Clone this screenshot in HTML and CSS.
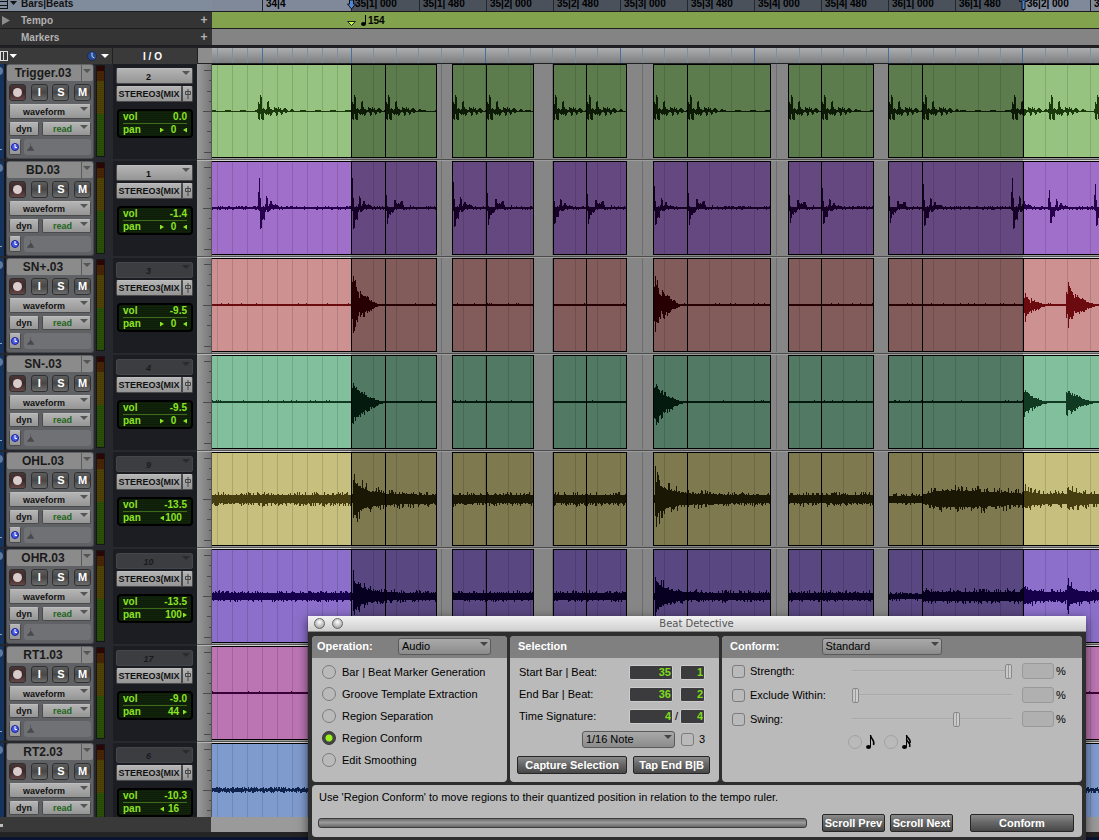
FILE: index.html
```html
<!DOCTYPE html>
<html lang="en">
<head>
    <meta charset="UTF-8">
    <meta name="viewport" content="width=device-width, initial-scale=1.0">
    <title>Beat Detective</title>
    <link rel="stylesheet" href="styles.css">
</head>
<body>
    <div class="editor">
        <div class="ruler-row bars">
            <div class="ruler-label">
                <svg class="ruler-icon" width="18" height="11"><path d="M0 1.5h7M0 5.5h7M0 8.5h7M7.500 0v9" stroke="#111" fill="none"/><path d="M10 1h7l-3.500 4z" fill="#111"/></svg>
                <span>Bars|Beats</span>
            </div>
            <svg class="ruler-view" id="bars"></svg>
        </div>
        <div class="ruler-row tempo">
            <div class="ruler-label">
                <svg class="ruler-icon" width="18" height="16"><path d="M2 4l8 4.500l-8 4.500z" fill="#8d8d8d"/></svg>
                <span>Tempo</span>
                <button class="add" aria-label="Add tempo change">+</button>
            </div>
            <svg class="ruler-view" id="tempo">
                <path d="M135.500 9.500h8l-4 4z" fill="#c8ff3c" stroke="#222"/>
                <path d="M153.500 3v9" stroke="#000" fill="none"/>
                <ellipse cx="151.500" cy="12" rx="2.500" ry="2" fill="#000"/>
                <text x="156" y="12">154</text>
            </svg>
        </div>
        <div class="ruler-row markers">
            <div class="ruler-label">
                <span>Markers</span>
                <button class="add" aria-label="Add marker">+</button>
            </div>
            <div class="ruler-view"></div>
        </div>
        <div class="column-head">
            <div class="head-tools">
                <svg width="18" height="12"><path d="M0 1.500h7M0 10.500h7M0.500 1v10M3.500 1v10M7.500 1v10" stroke="#ddd" fill="none"/><path d="M9.500 4h7.500l-3.750 4z" fill="#fff"/></svg>
                <svg width="26" height="12"><circle cx="6" cy="6" r="4.500" fill="#274b8f" stroke="#182c55"/><path d="M6 2.500v4l2.500 1.500" stroke="#c3d4f5" fill="none"/><path d="M15 4h8l-4 4z" fill="#fff"/></svg>
            </div>
            <div class="head-io">I / O</div>
            <svg class="head-grid" id="headGrid"></svg>
        </div>
        <div class="tracks" id="tracks"></div>
        <div class="scroll-row">
            <div class="scroll-left"></div>
            <div class="scroll-right"></div>
        </div>
        <div class="bottom-edge"></div>
    </div>

    <form class="window" onsubmit="return false">
        <div class="titlebar">
            <button class="light" type="button" aria-label="Close"></button>
            <button class="light" type="button" aria-label="Minimize"></button>
            <h1>Beat Detective</h1>
        </div>
        <div class="panels">
            <section class="panel">
                <div class="panel-head">
                    <label for="operation">Operation:</label>
                    <span class="drop drop-audio"><select id="operation"><option>Audio</option><option>MIDI</option></select></span>
                </div>
                <div class="operations">
                    <label><input type="radio" name="op">Bar | Beat Marker Generation</label>
                    <label><input type="radio" name="op">Groove Template Extraction</label>
                    <label><input type="radio" name="op">Region Separation</label>
                    <label><input type="radio" name="op" checked>Region Conform</label>
                    <label><input type="radio" name="op">Edit Smoothing</label>
                </div>
            </section>
            <section class="panel">
                <div class="panel-head"><h2>Selection</h2></div>
                <div class="selection">
                    <div class="sel-row">
                        <label for="startBar">Start Bar | Beat:</label>
                        <input class="bar" id="startBar" type="text" value="35">
                        <span></span>
                        <input class="beat" type="text" value="1" aria-label="Start beat">
                    </div>
                    <div class="sel-row">
                        <label for="endBar">End Bar | Beat:</label>
                        <input class="bar" id="endBar" type="text" value="36">
                        <span></span>
                        <input class="beat" type="text" value="2" aria-label="End beat">
                    </div>
                    <div class="sel-row">
                        <label for="meter">Time Signature:</label>
                        <input class="bar" id="meter" type="text" value="4">
                        <span>/</span>
                        <input class="beat" type="text" value="4" aria-label="Beat unit">
                    </div>
                    <div class="note-row">
                        <span class="drop drop-note"><select aria-label="Resolution"><option>1/16 Note</option><option>1/8 Note</option></select></span>
                        <label><input type="checkbox">3</label>
                    </div>
                    <div class="button-row">
                        <button class="btn btn-capture" type="button">Capture Selection</button>
                        <button class="btn btn-tap" type="button">Tap End B|B</button>
                    </div>
                </div>
            </section>
            <section class="panel">
                <div class="panel-head">
                    <label for="conform">Conform:</label>
                    <span class="drop drop-standard"><select id="conform"><option>Standard</option><option>Groove</option></select></span>
                </div>
                <div class="conform">
                    <div class="amount">
                        <label><input type="checkbox">Strength:</label>
                        <input type="range" value="100" aria-label="Strength amount">
                        <input type="text" aria-label="Strength percent">
                        <span>%</span>
                    </div>
                    <div class="amount">
                        <label><input type="checkbox">Exclude Within:</label>
                        <input type="range" value="0" aria-label="Exclude amount">
                        <input type="text" aria-label="Exclude percent">
                        <span>%</span>
                    </div>
                    <div class="amount">
                        <label><input type="checkbox">Swing:</label>
                        <input type="range" value="66" aria-label="Swing amount">
                        <input type="text" aria-label="Swing percent">
                        <span>%</span>
                    </div>
                    <div class="swing-notes">
                        <label>
                            <input type="radio" name="swing" aria-label="Eighth note">
                            <svg width="12" height="16"><path d="M5.500 1v12" stroke="#000" fill="none"/><ellipse cx="3.500" cy="13" rx="2.500" ry="2" fill="#000"/><path d="M5.500 1c0 4 5 5 3 10" stroke="#000" stroke-width="1.500" fill="none"/></svg>
                        </label>
                        <label>
                            <input type="radio" name="swing" aria-label="Sixteenth note">
                            <svg width="12" height="16"><path d="M5.500 1v12" stroke="#000" fill="none"/><ellipse cx="3.500" cy="13" rx="2.500" ry="2" fill="#000"/><path d="M5.500 1c0 3 5 4 3.500 8M5.500 5c0 3 5 4 3 8" stroke="#000" stroke-width="1.500" fill="none"/></svg>
                        </label>
                    </div>
                </div>
            </section>
        </div>
        <div class="panel footer">
            <p>Use 'Region Conform' to move regions to their quantized position in relation to the tempo ruler.</p>
            <div class="footer-row">
                <div class="progress"></div>
                <button class="btn btn-scroll" type="button">Scroll Prev</button>
                <button class="btn btn-scroll" type="button">Scroll Next</button>
                <button class="btn btn-conform" type="button">Conform</button>
            </div>
        </div>
    </form>

    <script src="script.js"></script>
</body>
</html>
```
FILE: styles.css
```css
* {
    box-sizing: border-box;
}
body {
    margin: 0;
    height: 100vh;
    overflow: hidden;
    position: relative;
    background: #232323;
    font-family: "Liberation Sans", Arial, sans-serif;
    font-size: 11px;
    color: #000;
}
button, input, select {
    font-family: inherit;
    margin: 0;
    padding: 0;
    border: none;
    border-radius: 0;
    appearance: none;
}
svg {
    display: block;
    flex: none;
}
h1, h2, p {
    margin: 0;
}

/* rulers */
.editor {
    display: flex;
    flex-direction: column;
    height: 100vh;
}
.ruler-row {
    flex: none;
    display: grid;
    grid-template-columns: 212px 1fr;
    height: 17px;
    border-bottom: 1px solid #1c1c1e;
    font-size: 10px;
    font-weight: bold;
}
.ruler-label {
    display: flex;
    align-items: center;
    padding: 0 3px 0 21px;
    background: #343434;
    color: #b2b2b2;
    position: relative;
}
.ruler-icon {
    position: absolute;
    left: 0;
    top: 0;
}
.ruler-view {
    width: 100%;
    height: 100%;
    font-size: 10px;
}
.add {
    margin-left: auto;
    width: 10px;
    background: none;
    color: #b2b2b2;
    font-size: 12px;
    font-weight: bold;
    line-height: 14px;
}
.bars {
    height: 12px;
}
.bars .ruler-label {
    background: #808b9b;
    color: #111;
    line-height: 8px;
    align-items: flex-start;
}
.bars .ruler-view {
    background: #808999;
}
.tempo .ruler-view {
    background: #82a24d;
}
.markers .ruler-view {
    background: #848484;
}
.column-head {
    flex: none;
    display: grid;
    grid-template-columns: 112px 84px 1fr;
    gap: 1px;
    height: 18px;
    padding-top: 2px;
    background: #202123;
}
.head-tools, .head-io {
    display: flex;
    align-items: center;
    justify-content: space-between;
    background: #3a3a3a;
}
.head-io {
    justify-content: center;
    padding-right: 5px;
    color: #fff;
    font-weight: bold;
    font-size: 10px;
}
.head-grid {
    width: 100%;
    height: 15px;
    background: linear-gradient(#acaeaf, #999b9d 40%, #7c7e80);
}

/* tracks */
.tracks {
    flex: 1;
    min-height: 0;
    overflow: hidden;
    background: #26282d;
}
.track {
    display: grid;
    grid-template-columns: 6px 88px 15px 4px 84px 15px 1fr;
    height: 97px;
}
.edge {
    background: #16335e;
    border-right: 2px solid #15171c;
    height: 95px;
    overflow: hidden;
}
.strip {
    height: 95px;
    background: #5f6165;
    border: 1px solid #46484c;
    border-top: none;
    border-radius: 3px;
    padding: 1px 0 3px;
    display: flex;
    flex-direction: column;
    gap: 3px;
}
.name {
    display: flex;
    height: 16px;
    background: #8b8b8b;
    border-radius: 2px;
}
.name span {
    flex: 1;
    padding-right: 2px;
    text-align: center;
    font-size: 12px;
    font-weight: bold;
    line-height: 17px;
    color: #1a1a1a;
    white-space: nowrap;
}
.name button {
    width: 12px;
    background: none;
    border-left: 1px solid #5b5b5b;
    position: relative;
}
.name button::after, .pick::after {
    content: "";
    position: absolute;
    right: 2px;
    top: 4px;
    border: 4px solid transparent;
    border-top-color: #555;
    border-bottom: none;
}
.keys {
    display: flex;
    justify-content: space-between;
    padding: 0 2px;
}
.key {
    width: 17px;
    height: 17px;
    border: 1px solid #303030;
    border-radius: 3px;
    background: linear-gradient(#5e5e5e, #474747 50%, #6c6c6c);
    color: #fff;
    font-size: 11px;
    font-weight: bold;
    line-height: 15px;
    text-align: center;
}
.key.rec {
    background: linear-gradient(#4a3636, #3e2828 50%, #664848);
}
.key.rec::before {
    content: "";
    display: block;
    width: 9px;
    height: 9px;
    margin: 0 auto;
    border-radius: 50%;
    background: #d8cccc;
}
.modes {
    display: flex;
    gap: 3px;
    padding: 0 2px;
    height: 16px;
}
.pick {
    flex: 1;
    position: relative;
    display: block;
}
.pick select, .flat {
    width: 100%;
    height: 100%;
    border-radius: 2px;
    border: 1px solid #4a4a4a;
    border-top-color: #bdbdbd;
    background: linear-gradient(#b4b4b4, #959595);
    color: #111;
    font-size: 9px;
    font-weight: bold;
}
.pick select {
    padding: 1px 12px 0 0;
    text-align: center;
    text-align-last: center;
}
.pick::after {
    top: 3px;
    right: 3px;
    pointer-events: none;
}
.flat.dyn {
    width: 30px;
}
.flat.clock {
    width: 12px;
    display: flex;
    align-items: center;
    justify-content: center;
}
.read select {
    color: #1c6418;
    padding-right: 8px;
}
.comment {
    flex: 1;
    background: #707174;
    border-radius: 3px;
    padding: 4px 3px;
}
.meter {
    margin: 1px 4px 2px 2px;
    height: 92px;
    border: 1px solid #15161a;
    background: repeating-linear-gradient(transparent 0 1px, rgba(0,0,0,0.12) 1px 2px), linear-gradient(#2c0705 0 5px, #4b2606 5px 15px, #514406 15px 48px, #2a5208 48px);
}
.io {
    height: 95px;
    background: #1b1d22;
    padding: 4px 4px 0 3px;
}
.io .pick {
    height: 16px;
    margin-bottom: 2px;
}
.io .output {
    display: flex;
    height: 16px;
}
.io .output .flat:first-child {
    flex: 1;
    border-radius: 2px 0 0 2px;
    white-space: nowrap;
}
.io .output .flat:last-child {
    width: 11px;
    border-radius: 0 2px 2px 0;
    display: flex;
    align-items: center;
    justify-content: center;
}
.io .off select {
    background: #3c3d41;
    border-color: #45464b;
    color: #1b1b1d;
    font-style: italic;
    opacity: 1;
}
.io .off::after {
    border-top-color: #2a2b2e;
}
.level {
    margin: 7px 0 0 1px;
    padding: 0 4px;
    height: 29px;
    border: 2px solid #000;
    border-radius: 4px;
    background: repeating-linear-gradient(#0d1d08 0 1px, #13240d 1px 2px);
    color: #8be321;
    font-size: 10px;
    font-weight: bold;
}
.level div {
    display: flex;
    justify-content: space-between;
    align-items: center;
    height: 12px;
    line-height: 12px;
}
.level div + div {
    border-top: 1px solid #3c6a1a;
    height: 13px;
}
.pan {
    display: grid;
    grid-template-columns: 4px 19px 4px;
    align-items: center;
    text-align: center;
}
.pan i {
    height: 5px;
    background: #8be321;
    visibility: hidden;
}
.pan .left {
    clip-path: polygon(100% 0, 100% 100%, 0 50%);
    visibility: visible;
}
.pan .right {
    clip-path: polygon(0 0, 0 100%, 100% 50%);
    visibility: visible;
}
.gutter {
    width: 15px;
    height: 97px;
    background: linear-gradient(90deg, #9a9a9a, #767676);
}
.lane {
    width: 100%;
    height: 97px;
    background: #c4c4c4;
}
.scroll-row {
    flex: none;
    display: grid;
    grid-template-columns: 211px 1fr;
    height: 15px;
    background: #393939;
}
.scroll-left {
    background: linear-gradient(#bbb, #bbb) 0 7px / 3px 3px no-repeat;
}
.scroll-right {
    background: #9a9a9a;
}
.bottom-edge {
    flex: none;
    height: 8px;
    background: linear-gradient(#242424 0 5px, #0b1430 5px);
}

/* floating window */
.window {
    position: absolute;
    left: 308px;
    right: 13px;
    top: 616px;
    height: 226px;
    background: #2e2e2e;
    box-shadow: 0 3px 10px rgba(0,0,0,0.6);
}
.titlebar {
    display: flex;
    align-items: center;
    gap: 7px;
    height: 16px;
    padding-left: 6px;
    background: linear-gradient(#f2f2f2, #cfcfcf);
    border-bottom: 1px solid #8a8a8a;
    position: relative;
}
.titlebar h1 {
    flex: 1;
    margin-right: 43px;
    text-align: center;
    font-family: "DejaVu Sans", sans-serif;
    font-weight: normal;
    font-size: 10px;
    line-height: 16px;
    color: #555;
}
.light {
    width: 11px;
    height: 11px;
    border-radius: 50%;
    border: 1px solid #666;
    background: radial-gradient(circle at 50% 35%, #fff, #bbb 60%, #888);
}
.panels {
    display: grid;
    grid-template-columns: 195fr 209fr 360fr;
    gap: 3px;
    padding: 4px 4px 3px;
}
.panel {
    background: #bababa;
    border-radius: 4px;
    overflow: hidden;
    height: 146px;
}
.panel-head {
    display: flex;
    align-items: center;
    height: 22px;
    padding: 0 8px 2px 5px;
    background: #808080;
    color: #fff;
    font-weight: bold;
}
.panel-head h2 {
    font-size: 11px;
    padding-left: 3px;
}
.drop {
    display: block;
    position: relative;
    height: 17px;
    width: 93px;
}
.drop select {
    width: 100%;
    height: 100%;
    border: 1px solid #5a5a5a;
    border-radius: 3px;
    background: linear-gradient(#a9a9a9, #8b8b8b);
    padding-left: 3px;
    font-size: 11px;
    color: #000;
}
.drop::after {
    content: "";
    position: absolute;
    right: 3px;
    top: 4px;
    border: 4px solid transparent;
    border-top-color: #444;
    border-bottom: none;
    pointer-events: none;
}
.drop-audio {
    margin-left: auto;
    margin-right: 8px;
}
.drop-standard {
    width: 120px;
    margin-left: 42px;
}
.panel:nth-child(3) .panel-head {
    padding-left: 8px;
}
.operations {
    display: grid;
    grid-auto-rows: 22px;
    padding: 3px 0 0 10px;
}
label {
    display: flex;
    align-items: center;
    white-space: nowrap;
}
input[type="radio"] {
    width: 14px;
    height: 14px;
    margin-right: 6px;
    border: 1px solid #7c7c7c;
    border-radius: 50%;
}
input[type="radio"]:checked {
    border: 1px solid #333;
    background: radial-gradient(circle, #9af01c 0 3px, #444 4px);
}
input[type="checkbox"] {
    width: 13px;
    height: 13px;
    margin-right: 5px;
    border: 1px solid #7c7c7c;
    border-radius: 3px;
}
.selection {
    padding: 3px 14px 0 9px;
}
.sel-row {
    display: grid;
    grid-template-columns: 1fr 44px 7px 25px;
    align-items: center;
    height: 22px;
    text-align: center;
}
.sel-row input {
    width: 100%;
    height: 15px;
    background: #3b3b3d;
    border: 1px solid #ccc;
    border-radius: 2px;
    padding-right: 1px;
    text-align: right;
    color: #7ddc1b;
    font-size: 11px;
    font-weight: bold;
}
.note-row {
    display: flex;
    justify-content: flex-end;
    align-items: center;
    gap: 6px;
    height: 24px;
}
.button-row {
    display: flex;
    gap: 6px;
    margin: 5px -5px 0 -2px;
}
.btn {
    height: 18px;
    border: 1px solid #262626;
    border-radius: 2px;
    background: linear-gradient(#8a8a8a, #686868 45%, #474747);
    color: #fff;
    font-size: 11px;
    font-weight: bold;
    white-space: nowrap;
}
.btn-capture {
    flex: 110;
}
.btn-tap {
    flex: 76;
}
.conform {
    padding: 1px 10px 0;
}
.amount {
    display: grid;
    grid-template-columns: 1fr 160px 44px 16px;
    align-items: center;
    height: 24px;
}
.amount input[type="text"] {
    height: 16px;
    width: 32px;
    margin-left: 10px;
    background: #b0b0b0;
    border: 1px solid #999;
    border-radius: 3px;
}
.amount input[type="range"] {
    width: 160px;
    height: 16px;
    background: linear-gradient(#a0a0a0, #c6c6c6) center / 100% 2px no-repeat;
}
.amount input[type="range"]::-webkit-slider-thumb {
    appearance: none;
    width: 7px;
    height: 15px;
    border: 1px solid #888;
    border-radius: 2px;
    background: linear-gradient(90deg, #c8c8c8 2px, #999 2px 3px, #ccc 3px);
}
.swing-notes {
    display: flex;
    gap: 7px;
    height: 22px;
    padding-left: 116px;
}
.swing-notes input[type="radio"] {
    margin-right: 3px;
    border-color: #a2a2a2;
}
.footer {
    height: 52px;
    margin: 0 4px;
    padding: 6px 8px 0 7px;
}
.footer p {
    line-height: 13px;
}
.footer-row {
    display: flex;
    align-items: center;
    gap: 5px;
    margin: 10px 0 0 -1px;
}
.progress {
    flex: 1;
    height: 10px;
    margin-right: 10px;
    border: 1px solid #3c3c3c;
    border-radius: 3px;
    background: linear-gradient(#6c6c6c, #9c9c9c 45%, #666);
}
.btn-scroll {
    width: 63px;
}
.btn-conform {
    width: 104px;
    margin-left: 12px;
}
```
FILE: script.js
```js
// Timeline coordinates count from the left edge of the lanes
const ORIGIN = 212;
const SEL_START = 351;
const SEL_END = 1023;
const BEATS = [351, 486, 620, 754, 888, 1023];
const CLIPS = [[351, 437, 385], [452, 534, 486], [553, 627, 586], [653, 771, 687], [788, 874, 821], [888, 1024, 922]];

const TRACKS = [
    { name: 'Trigger.03', out: '2', vol: '0.0', pan: '0', side: 'c', light: '#96c37f', dark: '#5d7c4e', ink: '#1b3a0c', inkDark: '#0c1a06', kind: 'trigger' },
    { name: 'BD.03', out: '1', vol: '-1.4', pan: '0', side: 'c', light: '#a06fca', dark: '#664880', ink: '#26004c', inkDark: '#160025', kind: 'kick' },
    { name: 'SN+.03', out: '3', off: true, vol: '-9.5', pan: '0', side: 'c', light: '#cc9190', dark: '#815c5b', ink: '#6b0a0f', inkDark: '#260003', kind: 'snareTop' },
    { name: 'SN-.03', out: '4', off: true, vol: '-9.5', pan: '0', side: 'c', light: '#82bf9c', dark: '#517963', ink: '#103a22', inkDark: '#041a0e', kind: 'snareBottom' },
    { name: 'OHL.03', out: '9', off: true, vol: '-13.5', pan: '100', side: 'l', light: '#c7bf7d', dark: '#7e794f', ink: '#463e10', inkDark: '#1a1805', kind: 'overLeft' },
    { name: 'OHR.03', out: '10', off: true, vol: '-13.5', pan: '100', side: 'r', light: '#8b6fca', dark: '#584780', ink: '#16004c', inkDark: '#080020', kind: 'overRight' },
    { name: 'RT1.03', out: '17', off: true, vol: '-9.0', pan: '44', side: 'r', light: '#bb75b3', dark: '#774a72', ink: '#3a0035', inkDark: '#1a0018', kind: 'line' },
    { name: 'RT2.03', out: '6', off: true, vol: '-10.3', pan: '16', side: 'l', light: '#7f9bce', dark: '#516384', ink: '#10234c', inkDark: '#081228', kind: 'hiss' }
];

// [up, down] in pixels for each column after the hit
const TRIGGER = [[2, 1], [9, 7], [7, 8], [16, 2], [14, 7], [2, 8], [3, 8], [2, 1], [1, 2], [2, 3], [9, 2], [10, 3], [4, 2], [2, 4], [2, 3], [1, 1], [1, 0], [4, 0], [3, 1], [3, 4], [2, 3], [4, 0], [2, 0], [3, 1], [1, 3], [1, 2], [2, 0], [3, 0], [3, 1], [2, 1], [1, 0], [0, 0], [0, 0], [1, 0], [2, 0], [2, 0], [1, 0]];
const KICK = [[16, 1], [30, 2], [10, 20], [1, 19], [1, 11], [2, 10], [1, 11], [4, 3], [12, 1], [10, 3], [2, 3], [4, 2], [7, 1], [7, 0], [4, 0], [3, 1], [3, 0], [4, 0], [3, 0], [3, 0], [2, 0], [1, 1], [1, 0], [2, 0], [1, 1], [1, 0]];
// second strokes ring with a later, broader tail
const KICK_SECOND = [[30, 1], [25, 3], [3, 22], [1, 14], [1, 8], [2, 9], [1, 5], [1, 6], [1, 4], [12, 1], [12, 0], [7, 1], [6, 0], [7, 0], [6, 0], [9, 0], [10, 0], [10, 0], [4, 2], [2, 1], [1, 0], [1, 1], [2, 0], [1, 0], [1, 1], [4, 0], [2, 0], [1, 0]];
const TRIGGER_HITS = [257, 351, 385, 452, 486, 552, 586, 653, 687, 788, 821, 888, 922, 1011, 1048, 1094];
const KICK_HITS = [[258, 30], [351, 30], [385, 16, 1], [452, 26], [486, 18, 1], [552, 20], [586, 17, 1], [653, 22], [687, 18, 1], [788, 15, 1], [821, 20], [888, 14, 1], [922, 24], [1011, 30], [1048, 18], [1094, 24]];
const SNARE_HITS = {
    snareTop: [[351, 40, 38, 28], [653, 40, 38, 28], [1023, 18, 21, 24], [1066, 30, 28, 30]],
    snareBottom: [[351, 21, 26, 34], [653, 21, 26, 32], [1023, 14, 16, 26], [1066, 14, 15, 30]]
};

function noise(n) {
    const v = Math.sin(n * 127.1 + 311.7) * 43758.5453;
    return v - Math.floor(v);
}

function lastHit(hits, x) {
    let found = null;
    for (const hit of hits) {
        if (hit[0] <= x) found = hit;
    }
    return found;
}

function amplitude(kind, x, seed) {
    const r = noise(x + seed * 1000);
    const r2 = noise(x * 3 + seed * 777);
    if (kind === 'trigger') {
        const hit = lastHit(TRIGGER_HITS.map(h => [h]), x);
        const step = hit && TRIGGER[x - hit[0]];
        return step || [x % 15 < 6 ? 1 : 0, 0];
    }
    if (kind === 'kick') {
        const hit = lastHit(KICK_HITS, x);
        const step = hit && (hit[2] ? KICK_SECOND : KICK)[x - hit[0]];
        if (step && x - hit[0] < 3) return [Math.max(1, step[0] * hit[1] / 30), step[1] * (hit[1] + 12) / 42];
        if (step) return [Math.max(1, step[0] * (hit[1] + 12) / 42), step[1] * (hit[1] + 12) / 42];
        return [r > 0.7 ? 2 : 1, r2 > 0.8 ? 1 : 0];
    }
    if (SNARE_HITS[kind]) {
        const hit = lastHit(SNARE_HITS[kind], x);
        if (hit && x - hit[0] < hit[3]) {
            const t = (x - hit[0]) / hit[3];
            let env;
            if (kind === 'snareBottom') {
                env = Math.pow(1 - t, 1.5);
            } else if (t < 0.3) {
                env = t < 0.05 ? 0.6 : 1.1 - t * 3;
            } else {
                env = 0.4 * Math.pow(1 - (t - 0.3) / 0.7, 1.2);
            }
            return [Math.max(1, hit[1] * env * (0.6 + r * 0.4)), hit[2] * env * (0.5 + r2 * 0.5)];
        }
        return [r > 0.93 ? 2 : 1, 0];
    }
    if (kind === 'overLeft' || kind === 'overRight') {
        const left = kind === 'overLeft';
        let level = left ? 5 : 4;
        for (const start of [353, 655]) {
            if (x >= start && x < start + 85) level += (left ? 17 : 16) * Math.exp(-(x - start) / 9) + (left ? 3 : 1) * (1 - (x - start) / 85);
        }
        if (x > 888 && x < 922) level = left ? 4 : 3;
        if (x >= 922 && x < 1023) level = left ? Math.min(10, 5 + (x - 922) / 3) - Math.max(0, (x - 975) / 16) : 5.5;
        if (x >= 1023) level = (left ? 6 : 5) + 6 * Math.exp(-(x - 1023) / 8);
        if (x >= 1067) level += (left ? 7 : 9) * Math.exp(-(x - 1067) / 8);
        return [level * (0.75 + r * r * r * 0.7), level * (0.65 + r2 * r2 * r2 * 0.7)];
    }
    if (kind === 'hiss') return [1 + r * 2, r2 * 2];
    return [r > 0.96 ? 2 : 1, 0];
}

function gridXs() {
    const xs = [];
    for (let x = 217; x < 350; x += 15) xs.push(x);
    for (let i = 0; i <= 33; i++) xs.push(Math.floor(351.5 + i * 22.38));
    return xs;
}

function rect(x, y, w, h, fill) {
    return `<rect x="${x}" y="${y}" width="${w}" height="${h}" fill="${fill}"/>`;
}

function wavePath(track, from, to, seed, color) {
    let d = '';
    for (let x = from; x < to; x++) {
        const [up, down] = amplitude(track.kind, x, seed).map(Math.round);
        d += `M${x - ORIGIN} ${47 - up}h1v${up + down + 1}h-1z`;
    }
    return `<path d="${d}" fill="${color}"/>`;
}

function laneSvg(track, seed) {
    const selX = SEL_START - ORIGIN;
    const selW = SEL_END - SEL_START;
    let s = rect(0, 94, '100%', 1, '#999') + rect(0, 95, '100%', 1, '#555') + rect(0, 96, '100%', 1, '#d2d2d2');
    s += rect(selX, 0, selW, 97, '#868686') + rect(selX, 95, selW, 1, '#4c4c4c') + rect(selX, 96, selW, 1, '#9c9c9c');
    for (const x of gridXs()) s += rect(x - ORIGIN, 0, 1, 94, 'rgba(60,60,110,0.12)');

    s += rect(0, 0, selX, 94, track.light) + rect(SEL_END - ORIGIN, 0, '100%', 94, track.light);
    for (const [a, b] of CLIPS) s += rect(a - ORIGIN, 0, b - a, 94, track.dark);
    for (const x of gridXs()) s += rect(x - ORIGIN, 0, 1, 94, 'rgba(0,0,0,0.13)');
    s += wavePath(track, ORIGIN, SEL_START, seed, track.ink);
    for (const [a, b, split] of CLIPS) {
        s += wavePath(track, a, b, seed, track.inkDark);
        s += rect(a - ORIGIN, 0, 1, 94, '#000') + rect(b - 1 - ORIGIN, 0, 1, 94, '#000') + rect(split - ORIGIN, 0, 1, 94, '#000');
        s += rect(a - ORIGIN, 0, b - a, 1, '#000') + rect(a - ORIGIN, 93, b - a, 1, '#000');
    }
    s += wavePath(track, SEL_END + 1, 2400, seed, track.ink);
    for (const y of [0, 93]) s += rect(0, y, selX, 1, '#000') + rect(SEL_END - ORIGIN, y, '100%', 1, '#000');
    return `<svg class="lane" shape-rendering="crispEdges">${s}</svg>`;
}

function gutterSvg() {
    let s = '';
    [[6, 8], [16, 3], [27, 5], [37, 3], [47, 9], [57, 3], [67, 5], [78, 3], [88, 8]].forEach(([y, w]) => {
        s += rect(15 - w, y, w, 1, '#4a4a4a');
    });
    return `<svg class="gutter" shape-rendering="crispEdges">${s}${rect(14, 0, 1, 97, '#555')}${rect(0, 95, 15, 1, '#555')}${rect(0, 96, 15, 1, '#b5b5b5')}</svg>`;
}

function trackHtml(t, i) {
    const left = t.side === 'l' ? 'left' : t.side === 'c' ? 'right' : '';
    const right = t.side === 'r' ? 'right' : t.side === 'c' ? 'left' : '';
    return `<div class="track">
        <div class="edge"><svg width="4" height="95"><circle cx="-1" cy="7" r="4" fill="#60789a"/><path d="M0 85.500h2" stroke="#8fa5c4"/></svg></div>
        <div class="strip">
            <div class="name"><span>${t.name}</span><button aria-label="Playlist"></button></div>
            <div class="keys">
                <button class="key rec" aria-label="Record"></button>
                <button class="key">I</button>
                <button class="key">S</button>
                <button class="key">M</button>
            </div>
            <div class="modes"><span class="pick"><select aria-label="Track view"><option>waveform</option></select></span></div>
            <div class="modes">
                <button class="flat dyn">dyn</button>
                <span class="pick read"><select aria-label="Automation"><option>read</option></select></span>
            </div>
            <div class="modes">
                <button class="flat clock" aria-label="Timebase"><svg width="8" height="10"><circle cx="4" cy="5" r="3.500" fill="#4a5cf0" stroke="#1a2290"/><path d="M4 2v3.500h2" stroke="#fff" fill="none"/></svg></button>
                <div class="comment"><svg width="8" height="8"><path d="M3.500 0v5M4 3l3 4.500h-7z" fill="#48494c" stroke="#48494c" stroke-width="0.500"/></svg></div>
            </div>
        </div>
        <div class="meter"></div>
        <div></div>
        <div class="io">
            <span class="pick${t.off ? ' off' : ''}"><select aria-label="Input"><option>${t.out}</option></select></span>
            <div class="output">
                <button class="flat">STEREO3(MIX</button>
                <button class="flat" aria-label="Output window"><svg width="6" height="10"><path d="M3 0v10M0.500 2.500h5v3h-5z" stroke="#444" fill="none"/></svg></button>
            </div>
            <div class="level">
                <div><span>vol</span><span>${t.vol}</span></div>
                <div><span>pan</span><span class="pan"><i class="${left}"></i>${t.pan}<i class="${right}"></i></span></div>
            </div>
        </div>
        ${gutterSvg()}
        ${laneSvg(t, i)}
    </div>`;
}

function barsSvg() {
    const labels = [[262, '34|4'], [351, '35|1| 000'], [419, '35|1| 480'], [486, '35|2| 000'], [553, '35|2| 480'], [620, '35|3| 000'], [687, '35|3| 480'], [754, '35|4| 000'], [821, '35|4| 480'], [888, '36|1| 000'], [955, '36|1| 480'], [1023, '36|2| 000'], [1090, '36|2| 480']];
    let s = rect(SEL_START - ORIGIN, 0, SEL_END - SEL_START, 12, '#4a515b');
    for (const [x, text] of labels) {
        s += rect(x - ORIGIN, 0, 1, 12, '#23262b') + `<text x="${x - ORIGIN + 4}" y="7">${text}</text>`;
    }
    s += '<path d="M137.500 0v4h-2l4 5l4 -5h-2v-4z" fill="#4b86d8" stroke="#111"/>';
    s += '<path d="M807.500 0h8v1.500h-2.500v8h-3v-8h-2.500z" fill="#4b86d8" stroke="#111"/>';
    return s;
}

function headGridSvg() {
    let s = rect(0, 0, 14, 15, '#8d8d8d');
    for (const x of gridXs()) {
        const major = x === 262 || BEATS.some(b => Math.abs(b - x) < 2);
        s += rect(x - 198, 0, 1, 15, major ? '#45709f' : '#7f8f9f');
    }
    return s;
}

document.getElementById('bars').innerHTML = barsSvg();
document.getElementById('headGrid').innerHTML = headGridSvg();
document.getElementById('tracks').innerHTML = TRACKS.map(trackHtml).join('');
```
